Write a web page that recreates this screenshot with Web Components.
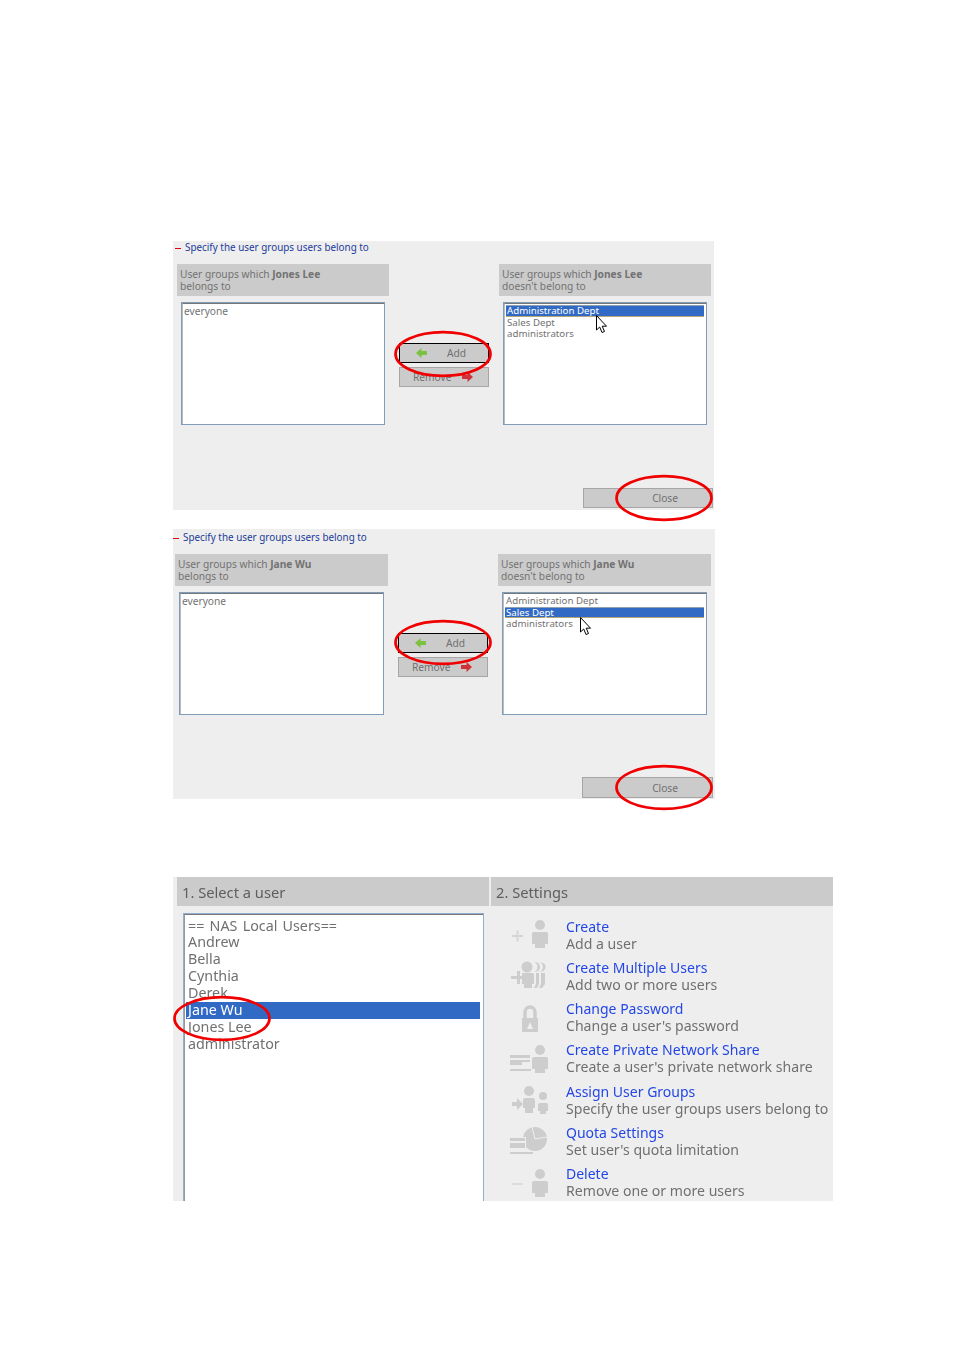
<!DOCTYPE html>
<html lang="en">
<head>
<meta charset="utf-8">
<title>User groups</title>
<style>
html,body{margin:0;padding:0;background:#fff}
body{font-family:"Noto Sans","Liberation Sans",sans-serif;color:#666;height:1350px;overflow:hidden}
</style>
</head>
<body>
<manual-page>
  <group-panel style="--w:541px;--h:269px;--title-h:23px;--title-pb:11px;--pad:4px;--col:212px;--list-w:204px;--title-pad:2px;--close-w:130px;--close-h:20px;--close-r:1px;--close-b:2px;--dash-top:7px">
    <span slot="title">Specify the user groups users belong to</span>
    <span slot="left-head">User groups which <b>Jones Lee</b><br>belongs to</span>
    <list-box slot="left-list"><list-item wide>everyone</list-item></list-box>
    <span slot="right-head">User groups which <b>Jones Lee</b><br>doesn't belong to</span>
    <list-box slot="right-list"><list-item selected>Administration Dept</list-item><list-item>Sales Dept</list-item><list-item>administrators</list-item></list-box>
    <red-ring style="left:221px;top:90px;width:98px;height:46px"></red-ring>
    <red-ring style="left:442px;top:234px;width:98px;height:46px"></red-ring>
    <mouse-arrow style="left:423px;top:74px"></mouse-arrow>
  </group-panel>
  <group-panel style="--w:542px;--h:270px;--title-h:25px;--title-pb:9px;--pad:2px;--col:213px;--list-w:205px;--title-pad:0px;--close-w:131px;--close-h:21px;--close-r:2px;--close-b:1px;--dash-top:9px;margin-top:19px">
    <span slot="title">Specify the user groups users belong to</span>
    <span slot="left-head">User groups which <b>Jane Wu</b><br>belongs to</span>
    <list-box slot="left-list"><list-item wide>everyone</list-item></list-box>
    <span slot="right-head">User groups which <b>Jane Wu</b><br>doesn't belong to</span>
    <list-box slot="right-list"><list-item>Administration Dept</list-item><list-item selected>Sales Dept</list-item><list-item>administrators</list-item></list-box>
    <red-ring style="left:221px;top:91px;width:98px;height:45px"></red-ring>
    <red-ring style="left:442px;top:236px;width:98px;height:45px"></red-ring>
    <mouse-arrow style="left:407px;top:88px"></mouse-arrow>
  </group-panel>
  <user-panel style="margin-top:78px">
    <span slot="left-head">1. Select a user</span>
    <span slot="right-head">2. Settings</span>
    <big-list slot="users">
      <big-item style="word-spacing:1.500px">== NAS Local Users==</big-item>
      <big-item>Andrew</big-item>
      <big-item>Bella</big-item>
      <big-item>Cynthia</big-item>
      <big-item>Derek</big-item>
      <big-item selected>Jane Wu</big-item>
      <big-item>Jones Lee</big-item>
      <big-item>administrator</big-item>
    </big-list>
    <setting-row slot="settings" icon="create" link="Create" desc="Add a user"></setting-row>
    <setting-row slot="settings" icon="multi" link="Create Multiple Users" desc="Add two or more users"></setting-row>
    <setting-row slot="settings" icon="lock" link="Change Password" desc="Change a user's password"></setting-row>
    <setting-row slot="settings" icon="share" link="Create Private Network Share" desc="Create a user's private network share"></setting-row>
    <setting-row slot="settings" icon="assign" link="Assign User Groups" desc="Specify the user groups users belong to"></setting-row>
    <setting-row slot="settings" icon="quota" link="Quota Settings" desc="Set user's quota limitation"></setting-row>
    <setting-row slot="settings" icon="delete" link="Delete" desc="Remove one or more users"></setting-row>
    <red-ring style="left:0;top:119px;width:98px;height:45px"></red-ring>
  </user-panel>
</manual-page>
<script>
function comp(name, css, html){
  customElements.define(name, class extends HTMLElement{
    constructor(){super();const r=this.attachShadow({mode:'open'});r.innerHTML='<style>'+css+'</style>'+(typeof html==='function'?html(this):html);}
  });
}
comp('manual-page',':host{display:flex;flex-direction:column;align-items:flex-start;padding:241px 0 0 173px}','<slot></slot>');

comp('group-panel',`
:host{display:flex;flex-direction:column;position:relative;width:var(--w);height:var(--h);background:#eee;font-size:10.2px;line-height:12px;color:#727272}
.title{height:var(--title-h);display:flex;align-items:center;padding-left:var(--title-pad);box-sizing:border-box;padding-bottom:var(--title-pb);color:#1a3a9a;font-size:9.900px}
.dash{flex:none;width:6px;height:1px;background:#e0000c;margin:0 4px 0 0;align-self:flex-start;margin-top:var(--dash-top)}
.cols{display:flex;padding-left:var(--pad)}
.col{width:var(--col)}
.head{height:32px;background:#cbcbcb;box-sizing:border-box;padding:4px 3px;margin-bottom:6px}
.list{margin-left:4px;width:var(--list-w);display:block}
.mid{width:110px;box-sizing:border-box;padding:79px 0 0 10px;display:flex;flex-direction:column;gap:4px}
.foot{margin-top:auto;display:flex;justify-content:flex-end;padding:0 var(--close-r) var(--close-b) 0}
.btn{box-sizing:border-box;height:20px;width:90px;background:#cbcbcb;border:1px solid #a6a6a6;display:flex;align-items:center;color:#707070}
.add{border:1px solid #000;padding-left:16px;gap:20px}
.rem{padding-left:13px;gap:10px}
.close{width:var(--close-w);height:var(--close-h);justify-content:flex-end;padding-right:34px}
`,`
<div class="title"><i class="dash"></i><slot name="title"></slot></div>
<div class="cols">
 <div class="col"><div class="head"><slot name="left-head"></slot></div><div class="list"><slot name="left-list"></slot></div></div>
 <div class="mid">
  <div class="btn add"><svg width="11" height="10" viewBox="0 0 11 10"><path d="M0 5 5.500 0v3H11v4H5.500v3z" fill="#7cc242"/></svg><span>Add</span></div>
  <div class="btn rem"><span>Remove</span><svg width="11" height="10" viewBox="0 0 11 10"><path d="M11 5 5.500 0v3H0v4h5.500v3z" fill="#cf3338"/></svg></div>
 </div>
 <div class="col"><div class="head"><slot name="right-head"></slot></div><div class="list"><slot name="right-list"></slot></div></div>
</div>
<div class="foot"><div class="btn close">Close</div></div>
<slot></slot>`);

comp('list-box',`
:host{display:block;box-sizing:border-box;height:123px;background:#fff;border:1px solid #7f9db9;padding:0}
.in{height:100%;box-sizing:border-box;border-top:1px solid #777;border-left:1px solid #bbb;padding:1px 2px 0 1px}
`,`<div class="in"><slot></slot></div>`);
comp('list-item',`
:host{display:block;height:11.6px;line-height:12px;padding-left:1px;color:#727272;white-space:nowrap;font-size:9.700px}
:host([wide]){font-size:10.2px;padding-left:0}
:host([selected]){background:#316ac5;color:#fff;box-shadow:inset 0 1px 0 #8f9fb0,inset 0 -1px 0 #b8a678}
`,`<slot></slot>`);

comp('red-ring',`:host{display:block;position:absolute;pointer-events:none}svg{display:block;width:100%;height:100%;overflow:visible}`,
`<svg viewBox="0 0 98 46" preserveAspectRatio="none"><ellipse cx="49" cy="23" rx="47.500" ry="21.800" fill="none" stroke="#f00000" stroke-width="2.700"/></svg>`);
comp('mouse-arrow',`:host{display:block;position:absolute;pointer-events:none}svg{display:block}`,
`<svg width="12" height="19" viewBox="0 0 12 19"><path d="M.5.500v14.500l3.200-3 2.300 5.500 2.500-1-2.300-5.300h4.300z" fill="#fff" stroke="#000" stroke-width="1"/></svg>`);

comp('user-panel',`
:host{display:grid;grid-template-columns:316px 342px;column-gap:2px;width:660px;height:324px;background:#eee;overflow:hidden;position:relative;font-size:14.700px;color:#707070;filter:blur(.25px)}
.h{height:29px;background:#cbcbcb;display:flex;align-items:center;box-sizing:border-box;padding-left:5px;color:#5e5e5e}
.l .h{margin-left:4px}
.l .b{padding:7px 0 0 10px}
.r .s{padding-top:12px;display:flex;flex-direction:column}
`,`
<div class="l"><div class="h"><slot name="left-head"></slot></div><div class="b"><slot name="users"></slot></div></div>
<div class="r"><div class="h"><slot name="right-head"></slot></div><div class="s"><slot name="settings"></slot></div></div>
<slot></slot>`);
comp('big-list',`
:host{display:block;box-sizing:border-box;width:301px;height:300px;background:#fff;border:1px solid #8fb0d0;border-bottom:0}
.in{height:100%;box-sizing:border-box;border-top:1px solid #777;border-left:1px solid #999;padding:2.600px 3px 0 1px}
`,`<div class="in"><slot></slot></div>`);
comp('big-item',`
:host{display:block;height:16.9px;line-height:16.9px;padding-left:2px;white-space:nowrap;color:#707070;font-size:14.300px}
:host([selected]){background:#316ac5;color:#fff}
`,`<slot></slot>`);

const person=(y)=>`<circle cx="32" cy="${y+7}" r="5"/><path d="M26 ${y+14}h12a2 2 0 0 1 2 2v10h-3v4H27v-4h-3V${y+16}a2 2 0 0 1 2-2z"/>`;
const ICONS={
 create:`<path d="M4 18h11M9.500 12.500v11" stroke="#d6d6d6" stroke-width="2" fill="none"/>`+person(0),
 multi:`<circle cx="33" cy="8" r="4.500"/><circle cx="30" cy="8" r="5" fill="#eee"/><circle cx="27" cy="8" r="5"/><circle cx="24" cy="8" r="5.500" fill="#eee"/><circle cx="19" cy="8" r="5.500"/>
 <path d="M14 14h10a2 2 0 0 1 2 2v9h-2v4h-8v-4h-2zM3 17h6v-5h3v5h4v3h-4v5H9v-5H3z"/><path d="M28 14h3v11l-2 4h-3l2-4zM33 14h4v11l-3 4h-3l2-4z"/>`,
 lock:`<path d="M17 19v-7a5 5 0 0 1 10 0v7" fill="none" stroke="#cdcdcd" stroke-width="3.500"/><path fill-rule="evenodd" d="M14 18h16v14H14zM22 22l-3 7h6z"/>`,
 share:`<path d="M2 14h20v3H2zM2 19h20v2H14v3H2z"/><path d="M2 28h21v2H2z"/>`+person(2),
 assign:`<circle cx="21" cy="8" r="5"/><path d="M17 15h8a2 2 0 0 1 2 2v8h-2v5h-8v-5h-2v-8a2 2 0 0 1 2-2z"/><circle cx="35" cy="13" r="4"/><path d="M32 20h6a2 2 0 0 1 2 2v6h-2v3h-6v-3h-2v-6a2 2 0 0 1 2-2z"/><path d="M4 19h5v-4l6 6-6 6v-4H4z"/>`,
 quota:`<circle cx="27" cy="15" r="12"/><path d="M27 15 24 3M27 15l12-2" stroke="#eee" stroke-width="1" fill="none"/><rect x="1" y="13" width="17" height="12" fill="#eee"/><path d="M2 14h15v3H2zM2 19h15v5H2zM2 28h23v2H2z"/>`,
 'delete':`<path d="M4 19h11" stroke="#dcdcdc" stroke-width="2" fill="none"/>`+person(2)
};
comp('setting-row',`
:host{display:flex;height:41.150px;padding-left:17px;box-sizing:border-box}
svg{width:44px;height:36px;fill:#cdcdcd;flex:none;display:block}
.t{margin-left:14px;line-height:17px;white-space:nowrap}
.a{color:#2347e6;display:block;font-size:14px}
.d{color:#707070;display:block;font-size:14.100px}
`,el=>`<svg viewBox="0 0 44 36">${ICONS[el.getAttribute('icon')]}</svg><div class="t"><span class="a">${el.getAttribute('link')}</span><span class="d">${el.getAttribute('desc')}</span></div>`);
</script>
</body>
</html>
